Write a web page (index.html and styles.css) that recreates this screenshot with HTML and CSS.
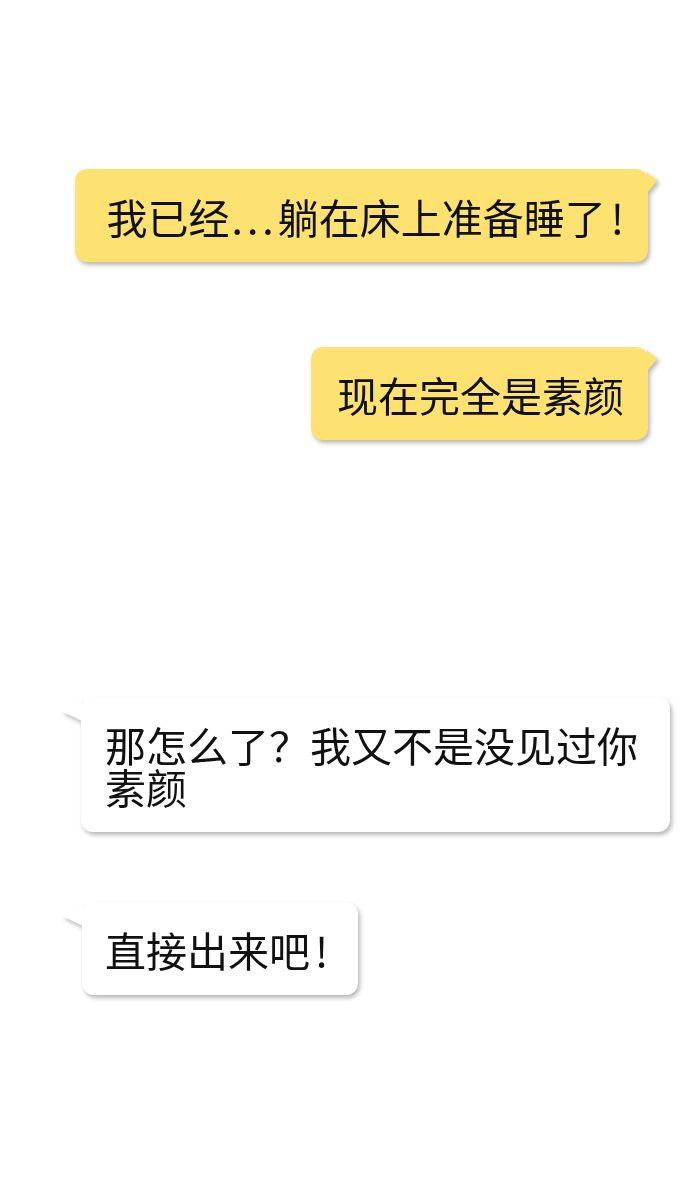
FILE: index.html
```html
<!DOCTYPE html>
<html lang="zh-CN">
  <head>
    <meta charset="UTF-8" />
    <meta name="viewport" content="width=device-width, initial-scale=1.0" />
    <title>聊天</title>
    <link rel="stylesheet" href="styles.css">
  </head>
  <body>
    <div class="chat">
      <!-- messaggi inviati -->
      <div class="bubble sent first">我已经<span class="dots">...</span>躺在床上准备睡了<span class="bang">!</span></div>
      <div class="bubble sent second">现在完全是素颜</div>

      <!-- messaggi ricevuti -->
      <div class="bubble received third">那怎么了？我又不是没见过你素颜</div>
      <div class="bubble received fourth">直接出来吧<span class="bang">!</span></div>
    </div>
  </body>
</html>
```

FILE: styles.css
```css
body,
html {
  margin: 0;
  padding: 0;
  background: #fff;
  font-family: "Noto Sans CJK SC", "Noto Sans", sans-serif;
  color: #111;
}

.chat {
  display: flex;
  flex-direction: column;
  padding: 169px 42px 0 81px;
  height: 1204px;
  box-sizing: border-box;
}

.bubble {
  position: relative;
  font-size: 41px;
  line-height: 42px;
  padding: 26px 24px 25px 26px;
  border-radius: 12px;
  filter: drop-shadow(2px 3px 2px rgba(0, 0, 0, 0.28));
}

/* coda del fumetto */
.bubble::after {
  content: "";
  position: absolute;
  background: inherit;
}

.sent {
  align-self: flex-end;
  background-color: #fde271;
  white-space: nowrap;
}

.sent::after {
  top: 3px;
  right: -10px;
  width: 11px;
  height: 21px;
  clip-path: polygon(0 0, 40% 20%, 100% 38%, 0 100%);
}

.received {
  align-self: flex-start;
  background-color: #fff;
}

.received::after {
  top: 3px;
  left: -20px;
  width: 21px;
  height: 21px;
  clip-path: polygon(100% 0, 40% 30%, 0 52%, 100% 100%);
}

.dots {
  letter-spacing: 4px;
  padding-left: 2px;
}

.bang {
  margin-left: 5px;
}

.first {
  padding-left: 32px;
  padding-right: 24px;
}

.second {
  margin-top: 85px;
}

.third {
  margin-top: 257px;
  width: 589px;
  box-sizing: border-box;
  padding-left: 24px;
}

.fourth {
  margin-top: 70px;
  margin-left: 1px;
  padding-left: 23px;
  padding-right: 30px;
}
```
